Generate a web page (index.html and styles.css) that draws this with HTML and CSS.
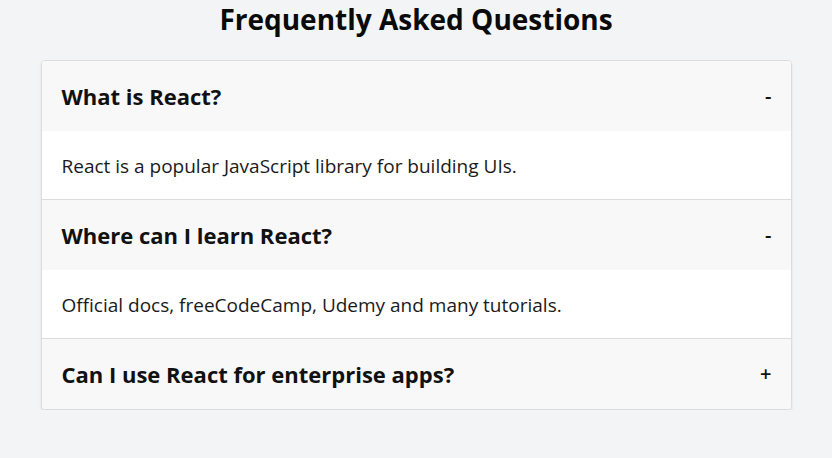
FILE: index.html
```html
<!DOCTYPE html>
<html>
<head>
<meta charset="utf-8">
<link rel="stylesheet" href="styles.css">
</head>
<body>
<div class="page">
  <h1 class="title">Frequently Asked Questions</h1>
  <div class="faq">
    <div class="item">
      <div class="question"><span>What is React?</span><span class="icon">-</span></div>
      <div class="answer">React is a popular JavaScript library for building UIs.</div>
    </div>
    <div class="item">
      <div class="question"><span>Where can I learn React?</span><span class="icon">-</span></div>
      <div class="answer">Official docs, freeCodeCamp, Udemy and many tutorials.</div>
    </div>
    <div class="item">
      <div class="question"><span>Can I use React for enterprise apps?</span><span class="icon">+</span></div>
    </div>
  </div>
</div>
</body>
</html>
```

FILE: styles.css
```css
html, body {
  margin: 0;
  padding: 0;
  background: #f3f4f6;
  font-family: "Open Sans", "Noto Sans", sans-serif;
  color: #111;
}
.page {
  display: flex;
  flex-direction: column;
  align-items: center;
}
.title {
  margin: 0 0 22px;
  font-size: 28px;
  line-height: 38px;
  font-weight: 700;
  color: #0a0a0a;
}
.faq {
  width: 751px;
  box-sizing: border-box;
  background: #fff;
  border: 1px solid #dcdcdc;
  border-radius: 4px;
  box-shadow: 0 2px 3px rgba(0,0,0,0.08);
  overflow: hidden;
}
.item + .item {
  border-top: 1px solid #dcdcdc;
}
.question {
  display: flex;
  justify-content: space-between;
  align-items: center;
  padding: 20px;
  background: #f8f8f9;
  font-size: 22px;
  line-height: 30px;
  font-weight: 700;
}
.icon {
  font-size: 20px;
  font-weight: 600;
  margin-right: -1px;
}
.answer {
  padding: 22px 20px 19px;
  font-size: 19px;
  line-height: 27px;
  color: #1a1a1a;
}
```
